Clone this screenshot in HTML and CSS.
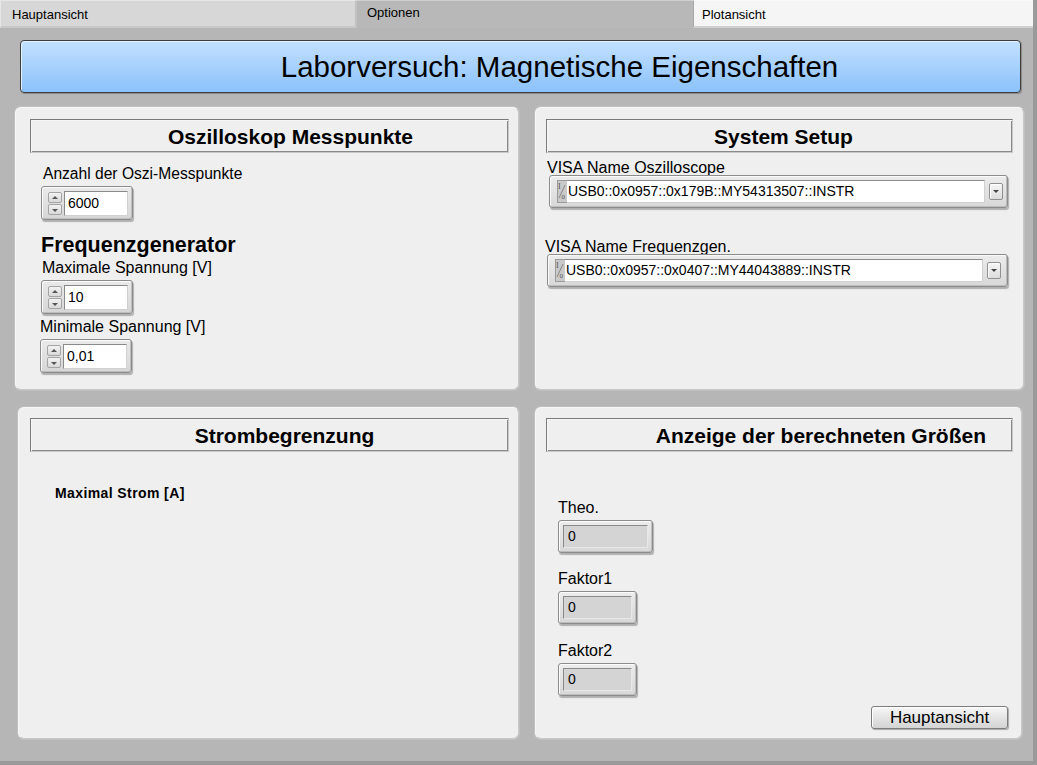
FILE: index.html
```html
<!DOCTYPE html>
<html lang="de">
<head>
<meta charset="utf-8">
<title>Laborversuch: Magnetische Eigenschaften</title>
<link rel="stylesheet" href="styles.css">
</head>
<body>
<div class="window">
  <div class="tabs">
    <div class="tab tab-a">Hauptansicht</div>
    <div class="tab tab-b">Optionen</div>
    <div class="tab tab-c">Plotansicht</div>
  </div>
  <div class="page">
    <div class="banner">Laborversuch: Magnetische Eigenschaften</div>
    <div class="grid">
      <section class="panel p1">
        <div class="head">Oszilloskop Messpunkte</div>
        <div class="lbl l-anz">Anzahl der Oszi-Messpunkte</div>
        <div class="num n-anz">
          <div class="spin"><span class="sb up"></span><span class="sb dn"></span></div>
          <div class="field">6000</div>
        </div>
        <div class="sub">Frequenzgenerator</div>
        <div class="lbl l-max">Maximale Spannung [V]</div>
        <div class="num n-max">
          <div class="spin"><span class="sb up"></span><span class="sb dn"></span></div>
          <div class="field">10</div>
        </div>
        <div class="lbl l-min">Minimale Spannung [V]</div>
        <div class="num n-min">
          <div class="spin"><span class="sb up"></span><span class="sb dn"></span></div>
          <div class="field">0,01</div>
        </div>
      </section>
      <section class="panel p2">
        <div class="head">System Setup</div>
        <div class="lbl l-v1">VISA Name Oszilloscope</div>
        <div class="visa v1">
          <div class="io"><svg width="10" height="22" viewBox="0 0 10 22"><text x="1" y="9" font-size="8" font-family="Liberation Serif, serif" fill="#555">I</text><line x1="8" y1="5" x2="2" y2="18" stroke="#777" stroke-width="0.8"/><text x="4.5" y="19" font-size="7" font-family="Liberation Serif, serif" fill="#555">0</text></svg></div>
          <div class="vfield">USB0::0x0957::0x179B::MY54313507::INSTR</div>
          <div class="drop"><span class="tri"></span></div>
        </div>
        <div class="lbl l-v2">VISA Name Frequenzgen.</div>
        <div class="visa v2">
          <div class="io"><svg width="10" height="22" viewBox="0 0 10 22"><text x="1" y="9" font-size="8" font-family="Liberation Serif, serif" fill="#555">I</text><line x1="8" y1="5" x2="2" y2="18" stroke="#777" stroke-width="0.8"/><text x="4.5" y="19" font-size="7" font-family="Liberation Serif, serif" fill="#555">0</text></svg></div>
          <div class="vfield">USB0::0x0957::0x0407::MY44043889::INSTR</div>
          <div class="drop"><span class="tri"></span></div>
        </div>
      </section>
      <section class="panel p3">
        <div class="head">Strombegrenzung</div>
        <div class="bold-lbl">Maximal Strom [A]</div>
      </section>
      <section class="panel p4">
        <div class="head">Anzeige der berechneten Größen</div>
        <div class="lbl l-theo">Theo.</div>
        <div class="ind wide"><div class="ifield">0</div></div>
        <div class="lbl l-f1">Faktor1</div>
        <div class="ind"><div class="ifield">0</div></div>
        <div class="lbl l-f2">Faktor2</div>
        <div class="ind"><div class="ifield">0</div></div>
        <div class="btn-row"><button class="btn">Hauptansicht</button></div>
      </section>
    </div>
  </div>
</div>
</body>
</html>
```
FILE: styles.css
```css
* { box-sizing: border-box; }
html, body { margin: 0; padding: 0; }
body {
  background: #b4b4b4;
  font-family: "Liberation Sans", Arial, sans-serif;
  color: #000;
  width: 1037px;
  height: 765px;
  overflow: hidden;
}
.window {
  width: 1037px;
  height: 765px;
  background: #b6b6b6;
  border-right: 4px solid #9a9a9a;
  border-bottom: 4px solid #9a9a9a;
}
.tabs {
  display: flex;
  height: 28px;
  font-size: 13px;
}
.tab {
  height: 28px;
  padding-left: 12px;
  line-height: 27px;
}
.tab-a {
  width: 357px;
  background: #d7d7d7;
  border-top: 1px solid #e6e6e6;
  border-left: 1px solid #e6e6e6;
  border-right: 2px solid #c2c2c2;
  border-bottom: 2px solid #c8c8c8;
  padding-left: 11px;
}
.tab-b {
  width: 336px;
  background: #b8b8b8;
  padding-left: 10px;
  line-height: 24px;
  border-top: 1px solid #d0d0d0;
}
.tab-c {
  width: 340px;
  background: #f5f5f5;
  border-top: 1px solid #fafafa;
  border-left: 1px solid #a9a9a9;
  border-bottom: 2px solid #d0d0d0;
  padding-left: 8px;
}
.page {
  padding-top: 12px;
}
.banner {
  margin-left: 20px;
  width: 1001px;
  height: 53px;
  border: 1px solid #3c3c3c;
  border-radius: 4px;
  background: linear-gradient(#c3e0ff, #a7d1fd 50%, #8bc2fb);
  box-shadow: inset 1px 1px 0 #e4f1ff, 1px 1px 1px #8a8a8a;
  text-align: center;
  padding-left: 78px;
  font-family: "Liberation Sans", Arial, sans-serif;
  font-size: 29.5px;
  line-height: 51px;
}
.grid {
  margin-top: 14px;
  margin-left: 15px;
  display: grid;
  grid-template-columns: 504px 489px;
  grid-template-rows: 283px 332px;
  column-gap: 16px;
  row-gap: 17px;
}
.panel {
  background: #efefef;
  border-radius: 6px;
  border: 1px solid #f7f7f7;
  border-right-color: #c8c8c8;
  border-bottom-color: #c8c8c8;
  box-shadow: 0 0 0 1px #c0c0c0;
  display: flex;
  flex-direction: column;
  align-items: flex-start;
}
.p1 { padding: 11px 0 0 14px; }
.p2 { padding: 11px 0 0 10px; }
.p3 { margin-left: 3px; padding: 10px 0 0 11px; }
.p4 { margin-right: 2px; padding: 10px 0 0 10px; }
.head {
  height: 34px;
  border: 1px solid #7a7a7a;
  border-right-color: #c8c8c8;
  border-bottom-color: #c8c8c8;
  box-shadow: inset 1px 1px 0 #f7f7f7, inset -1px -1px 0 #8a8a8a;
  background: #efefef;
  font-weight: bold;
  font-size: 21px;
  line-height: 33px;
  text-align: center;
  white-space: nowrap;
}
.p1 .head { width: 479px; padding-left: 42px; }
.p3 .head { width: 479px; padding-left: 30px; }
.p2 .head { width: 467px; padding-left: 8px; }
.p4 .head { width: 467px; text-align: right; padding-right: 26px; }

.lbl {
  font-size: 16px;
  line-height: 18px;
  white-space: nowrap;
}
.l-anz { margin: 12px 0 0 13px; font-size: 15.6px; }
.n-anz { margin: 3px 0 0 11px; }
.sub {
  margin: 14px 0 0 11px;
  font-weight: bold;
  font-size: 21.5px;
  line-height: 22px;
}
.l-max { margin: 3px 0 0 12px; }
.n-max { margin: 3px 0 0 11px; width: 93px; }
.l-min { margin: 4px 0 0 10px; }
.n-min { margin: 3px 0 0 10px; }

.num {
  width: 92px;
  height: 34px;
  border: 1px solid #8c8c8c;
  border-radius: 3px;
  background: linear-gradient(#eaeaea, #d6d6d6);
  box-shadow: inset 1px 1px 0 #fbfbfb, inset -1px -1px 0 #bdbdbd, 1px 2px 1px #b0b0b0;
  display: flex;
  align-items: center;
  padding-left: 6px;
  gap: 2px;
}
.spin {
  display: flex;
  flex-direction: column;
  gap: 1px;
}
.sb {
  display: block;
  width: 14px;
  height: 11px;
  border: 1px solid #a4a4a4;
  border-radius: 2px;
  background: linear-gradient(#f2f2f2, #d9d9d9);
  position: relative;
}
.sb::after {
  content: "";
  position: absolute;
  left: 3px;
  width: 0; height: 0;
  border-left: 3px solid transparent;
  border-right: 3px solid transparent;
}
.sb.up::after { top: 3px; border-bottom: 3px solid #555; }
.sb.dn::after { top: 4px; border-top: 3px solid #555; }
.field {
  flex: 1;
  margin-right: 4px;
  height: 25px;
  background: #fff;
  border: 1px solid #8a8a8a;
  border-right-color: #d0d0d0;
  border-bottom-color: #d0d0d0;
  font-size: 14px;
  line-height: 23px;
  padding-left: 3px;
}

.l-v1 { margin: 6px 0 0 1px; }
.v1 { margin: -2px 0 0 3px; }
.l-v2 { margin: 30px 0 0 -1px; }
.v2 { margin: -2px 0 0 1px; }
.visa {
  height: 33px;
  border: 1px solid #8c8c8c;
  border-radius: 3px;
  background: linear-gradient(#ececec, #d8d8d8);
  box-shadow: inset 1px 1px 0 #fbfbfb, inset -1px -1px 0 #bdbdbd, 1px 2px 1px #b0b0b0;
  display: flex;
  align-items: center;
  padding-left: 7px;
}
.v1 { width: 459px; }
.v2 { width: 461px; }
.io {
  width: 10px;
  height: 23px;
  background: #c9c9c9;
  border: 1px solid #9a9a9a;
  border-right: none;
}
.io svg { display: block; margin-top: -1px; margin-left: -1px; }
.vfield {
  width: 418px;
  height: 23px;
  background: #fff;
  border: 1px solid #8a8a8a;
  border-left: none;
  border-right-color: #d0d0d0;
  border-bottom-color: #d0d0d0;
  font-size: 14px;
  line-height: 21px;
  padding-left: 1px;
  white-space: nowrap;
}
.drop {
  margin-left: 4px;
  width: 14px;
  height: 17px;
  border: 1px solid #909090;
  border-radius: 2px;
  background: linear-gradient(#f6f6f6, #dcdcdc);
  box-shadow: inset 1px 1px 0 #fff;
  display: flex;
  align-items: center;
  justify-content: center;
}
.tri {
  width: 0; height: 0;
  border-left: 3px solid transparent;
  border-right: 3px solid transparent;
  border-top: 3px solid #444;
}

.bold-lbl {
  margin: 33px 0 0 25px;
  font-weight: bold;
  font-size: 14px;
  letter-spacing: 0.4px;
  line-height: 16px;
}

.l-theo { margin: 47px 0 0 12px; }
.l-f1 { margin: 17px 0 0 12px; }
.l-f2 { margin: 18px 0 0 12px; }
.ind {
  margin: 3px 0 0 12px;
  width: 79px;
  height: 33px;
  border: 1px solid #8c8c8c;
  border-radius: 3px;
  background: linear-gradient(#ececec, #d8d8d8);
  box-shadow: inset 1px 1px 0 #fbfbfb, inset -1px -1px 0 #bdbdbd, 1px 2px 1px #b0b0b0;
  padding: 4px;
}
.ind.wide { width: 95px; }
.ifield {
  height: 23px;
  background: #d4d4d4;
  border: 1px solid #8a8a8a;
  border-right-color: #e8e8e8;
  border-bottom-color: #e8e8e8;
  font-size: 14px;
  line-height: 21px;
  padding-left: 4px;
}
.btn-row {
  align-self: stretch;
  display: flex;
  justify-content: flex-end;
  padding-right: 13px;
  margin-top: 10px;
}
.btn {
  width: 137px;
  height: 23px;
  border: 1px solid #7c7c7c;
  border-radius: 3px;
  background: linear-gradient(#f7f7f7, #e4e4e4 50%, #d4d4d4);
  box-shadow: inset 1px 1px 0 #fff, 1px 1px 1px #a8a8a8;
  font-family: "Liberation Sans", Arial, sans-serif;
  font-size: 17px;
  line-height: 20px;
  padding: 0;
  color: #000;
}
```
